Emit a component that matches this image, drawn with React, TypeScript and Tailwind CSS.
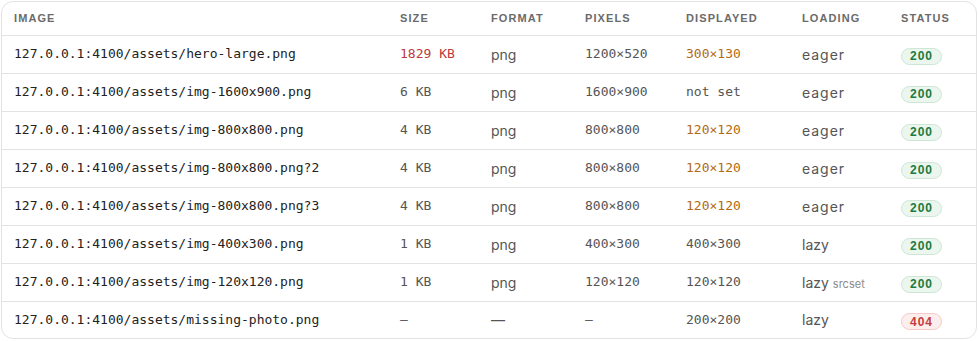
import type { ReactNode } from 'react';

type Row = {
  url: string;
  size: string;
  format: string;
  pixels: string;
  displayed: string;
  loading: string;
  srcset?: boolean;
  status: number;
  heavy?: boolean;
  scaled?: boolean;
};

const rows: Row[] = [
  { url: '127.0.0.1:4100/assets/hero-large.png', size: '1829 KB', format: 'png', pixels: '1200×520', displayed: '300×130', loading: 'eager', status: 200, heavy: true, scaled: true },
  { url: '127.0.0.1:4100/assets/img-1600x900.png', size: '6 KB', format: 'png', pixels: '1600×900', displayed: 'not set', loading: 'eager', status: 200 },
  { url: '127.0.0.1:4100/assets/img-800x800.png', size: '4 KB', format: 'png', pixels: '800×800', displayed: '120×120', loading: 'eager', status: 200, scaled: true },
  { url: '127.0.0.1:4100/assets/img-800x800.png?2', size: '4 KB', format: 'png', pixels: '800×800', displayed: '120×120', loading: 'eager', status: 200, scaled: true },
  { url: '127.0.0.1:4100/assets/img-800x800.png?3', size: '4 KB', format: 'png', pixels: '800×800', displayed: '120×120', loading: 'eager', status: 200, scaled: true },
  { url: '127.0.0.1:4100/assets/img-400x300.png', size: '1 KB', format: 'png', pixels: '400×300', displayed: '400×300', loading: 'lazy', status: 200 },
  { url: '127.0.0.1:4100/assets/img-120x120.png', size: '1 KB', format: 'png', pixels: '120×120', displayed: '120×120', loading: 'lazy', srcset: true, status: 200 },
  { url: '127.0.0.1:4100/assets/missing-photo.png', size: '—', format: '—', pixels: '—', displayed: '200×200', loading: 'lazy', status: 404 },
];

const mono = "font-['DejaVu_Sans_Mono','Liberation_Mono',monospace] text-[13px]";
const sans = "font-['Inter','Noto_Sans',sans-serif] text-[14px]";

function Th({ children, w }: { children: ReactNode; w: string }) {
  return (
    <th className={`${w} h-[33px] pl-3 text-left align-middle font-['Liberation_Sans','Arial',sans-serif] text-[11px] font-bold uppercase tracking-[0.1em] text-[#6b6b6b]`}>
      {children}
    </th>
  );
}

function Badge({ status }: { status: number }) {
  const ok = status < 400;
  return (
    <span
      className={`inline-flex h-[17px] items-center rounded-full border px-[8px] font-['Liberation_Sans','Arial',sans-serif] text-[12px] font-bold tracking-[0.08em] ${
        ok ? 'border-[#cfe6d6] bg-[#eaf6ee] text-[#1d7a3e]' : 'border-[#f3c9c9] bg-[#fdeeee] text-[#c43c3c]'
      }`}
    >
      {status}
    </span>
  );
}

export default function App() {
  return (
    <div className="bg-white p-px">
      <div className="overflow-hidden rounded-[12px] border border-[#e3e3e3] bg-white">
        <table className="w-full table-fixed border-collapse">
          <thead>
            <tr className="border-b border-[#e3e3e3]">
              <Th w="w-[386px]">Image</Th>
              <Th w="w-[91px]">Size</Th>
              <Th w="w-[94px]">Format</Th>
              <Th w="w-[101px]">Pixels</Th>
              <Th w="w-[116px]">Displayed</Th>
              <Th w="w-[99px]">Loading</Th>
              <Th w="w-auto">Status</Th>
            </tr>
          </thead>
          <tbody>
            {rows.map((r, i) => (
              <tr key={r.url} className={i < rows.length - 1 ? 'h-[38px] border-b border-[#e3e3e3]' : 'h-[37px]'}>
                <td className={`pl-3 ${mono} text-[#222]`}>{r.url}</td>
                <td className={`pl-3 ${mono} ${r.heavy ? 'text-[#c0393b]' : 'text-[#555]'}`}>{r.size}</td>
                <td className={`pl-3 ${sans} text-[#555]`}>{r.format}</td>
                <td className={`pl-3 ${mono} text-[#555]`}>{r.pixels}</td>
                <td className={`pl-3 ${mono} ${r.scaled ? 'text-[#b26a12]' : 'text-[#555]'}`}>{r.displayed}</td>
                <td className={`pl-3 ${sans} text-[#555]`}>
                  <span className={r.loading === 'eager' ? 'tracking-[0.07em]' : ''}>{r.loading}</span>
                  {r.srcset && <span className="ml-1 text-[11px] text-[#8a8a8a]">srcset</span>}
                </td>
                <td className="pl-3">
                  <Badge status={r.status} />
                </td>
              </tr>
            ))}
          </tbody>
        </table>
      </div>
    </div>
  );
}
